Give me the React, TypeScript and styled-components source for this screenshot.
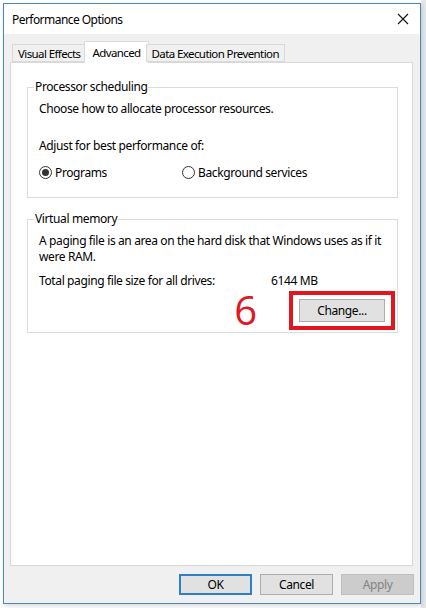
import React from "react";
import styled, { createGlobalStyle } from "styled-components";

const Global = createGlobalStyle`
  html, body { margin: 0; padding: 0; background: #ffffff; }
  body { font-family: "Noto Sans", "Segoe UI", sans-serif; font-size: 12px; color: #000; letter-spacing: -0.38px; }
`;

const Page = styled.div`
  width: 426px;
  height: 608px;
  padding: 3px 5px 0 3px;
  box-sizing: border-box;
  background: linear-gradient(to right, #ffffff 0, #ffffff 421px, #e6e6e6 421px);
`;

const Window = styled.div`
  width: 418px;
  height: 601px;
  box-sizing: border-box;
  border: 1px solid #4a86c0;
  background: #f0f0f0;
  display: flex;
  flex-direction: column;
  box-shadow: 1px 2px 4px rgba(0,0,0,0.15);
`;

const TitleBar = styled.div`
  height: 30px;
  background: #ffffff;
  display: flex;
  align-items: center;
  justify-content: space-between;
  padding: 0 8px 0 8px;
  flex-shrink: 0;
`;

const Title = styled.span`
  font-size: 12px;
  color: #000;
  letter-spacing: -0.55px;
`;

const CloseIcon = styled.svg`
  width: 12px;
  height: 12px;
  margin-right: 3px;
`;

const Body = styled.div`
  flex: 1;
  display: flex;
  flex-direction: column;
  padding: 7px 7px 0 6px;
`;

const TabRow = styled.div`
  display: flex;
  align-items: flex-end;
  height: 21px;
  padding-left: 2px;
  position: relative;
  z-index: 1;
`;

const Tab = styled.div<{ $active?: boolean }>`
  box-sizing: border-box;
  height: ${(p) => (p.$active ? "22px" : "18px")};
  margin: ${(p) => (p.$active ? "0 -1px -1px -2px" : "0")};
  padding: ${(p) => (p.$active ? "0 7px 1px 7px" : "0 5px")};
  border: 1px solid #d9d9d9;
  border-bottom: ${(p) => (p.$active ? "none" : "1px solid #d9d9d9")};
  background: ${(p) => (p.$active ? "#ffffff" : "#f0f0f0")};
  display: flex;
  align-items: center;
  font-size: 11.5px;
  letter-spacing: -0.6px;
  white-space: nowrap;
  & + & { margin-left: ${(p) => (p.$active ? "-2px" : "-1px")}; }
`;

const Panel = styled.div`
  height: 504px;
  box-sizing: border-box;
  background: #ffffff;
  border: 1px solid #d9d9d9;
  padding: 16px 14px 0 16px;
  display: flex;
  flex-direction: column;
  gap: 13px;
`;

const Group = styled.fieldset<{ $h: number }>`
  margin: 0;
  height: ${(p) => p.$h}px;
  box-sizing: border-box;
  border: 1px solid #dcdcdc;
  padding: 0 6px 0 11px;
  display: flex;
  flex-direction: column;
`;

const Legend = styled.legend`
  padding: 0 1px;
  margin-left: -5px;
  font-size: 12px;
  line-height: 16px;
`;

const Text = styled.div<{ $mt?: number }>`
  margin-top: ${(p) => p.$mt ?? 0}px;
  font-size: 12px;
  line-height: 16px;
`;

const RadioRow = styled.div`
  display: flex;
  align-items: center;
  margin-top: 10px;
`;

const Radio = styled.label<{ $w?: number }>`
  display: flex;
  align-items: center;
  gap: 3px;
  width: ${(p) => (p.$w ? `${p.$w}px` : "auto")};
  font-size: 12px;
`;

const RadioDot = styled.span<{ $on?: boolean }>`
  width: 11px;
  height: 11px;
  border-radius: 50%;
  border: 1px solid #333;
  background: #fff;
  display: flex;
  align-items: center;
  justify-content: center;
  &::after {
    content: "";
    width: 7px;
    height: 7px;
    border-radius: 50%;
    background: ${(p) => (p.$on ? "#333" : "transparent")};
  }
`;

const SizeRow = styled.div`
  display: flex;
  margin-top: 7px;
  font-size: 12px;
`;

const SizeLabel = styled.span`
  width: 232px;
`;

const ChangeRow = styled.div`
  display: flex;
  align-items: center;
  justify-content: flex-end;
  margin-top: 2px;
  gap: 32px;
  margin-right: -4px;
`;

const StepNumber = styled.span`
  font-family: "Open Sans", "Noto Sans", sans-serif;
  font-size: 40px;
  line-height: 38px;
  letter-spacing: 0;
  color: #e2161f;
  margin-bottom: 1px;
`;

const Highlight = styled.div`
  border: 4px solid #e2161f;
  padding: 4px 6px;
`;

const Button = styled.button<{ $primary?: boolean; $disabled?: boolean; $w?: number }>`
  box-sizing: border-box;
  width: ${(p) => p.$w ?? 73}px;
  height: ${(p) => (p.$w ? 23 : 21)}px;
  font-family: "Noto Sans", sans-serif;
  font-size: 12px;
  letter-spacing: -0.38px;
  padding: 0;
  background: ${(p) => (p.$disabled ? "#cccccc" : "#e1e1e1")};
  color: ${(p) => (p.$disabled ? "#838383" : "#000")};
  border: ${(p) => (p.$primary ? "2px solid #2e7fc6" : p.$disabled ? "1px solid #bfbfbf" : "1px solid #adadad")};
`;

const Footer = styled.div`
  display: flex;
  justify-content: flex-end;
  gap: 8px;
  padding: 8px 0 0 0;
  margin-right: -1px;
`;

export default function App() {
  return (
    <>
      <Global />
      <Page>
        <Window>
          <TitleBar>
            <Title>Performance Options</Title>
            <CloseIcon viewBox="0 0 12 12">
              <path d="M1 1 L11 11 M11 1 L1 11" stroke="#111" strokeWidth="1.1" fill="none" />
            </CloseIcon>
          </TitleBar>
          <Body>
            <TabRow>
              <Tab>Visual Effects</Tab>
              <Tab $active>Advanced</Tab>
              <Tab>Data Execution Prevention</Tab>
            </TabRow>
            <Panel>
              <Group $h={119}>
                <Legend>Processor scheduling</Legend>
                <Text $mt={6}>Choose how to allocate processor resources.</Text>
                <Text $mt={21}>Adjust for best performance of:</Text>
                <RadioRow>
                  <Radio $w={143}>
                    <RadioDot $on />
                    Programs
                  </Radio>
                  <Radio>
                    <RadioDot />
                    Background services
                  </Radio>
                </RadioRow>
              </Group>
              <Group $h={122}>
                <Legend>Virtual memory</Legend>
                <Text $mt={6}>
                  A paging file is an area on the hard disk that Windows uses as if it
                  <br />
                  were RAM.
                </Text>
                <SizeRow>
                  <SizeLabel>Total paging file size for all drives:</SizeLabel>
                  <span>6144 MB</span>
                </SizeRow>
                <ChangeRow>
                  <StepNumber>6</StepNumber>
                  <Highlight>
                    <Button $w={86}>Change...</Button>
                  </Highlight>
                </ChangeRow>
              </Group>
            </Panel>
            <Footer>
              <Button $primary>OK</Button>
              <Button>Cancel</Button>
              <Button $disabled>Apply</Button>
            </Footer>
          </Body>
        </Window>
      </Page>
    </>
  );
}
